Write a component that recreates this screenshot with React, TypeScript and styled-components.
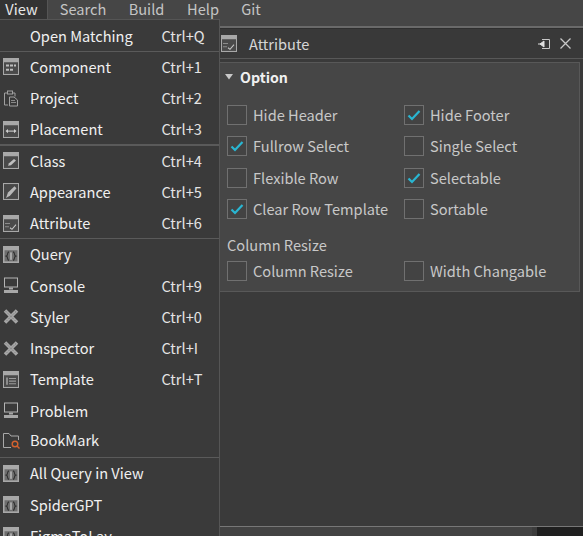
import React from "react";
import styled, { createGlobalStyle } from "styled-components";

const Global = createGlobalStyle`
  html, body { margin: 0; padding: 0; background: #3a3a3a; overflow: hidden; }
  body { font-family: "Noto Sans CJK KR", "Noto Sans CJK SC", sans-serif; font-size: 14.6px; line-height: 20px; color: #e8e8e8; }
  #root { width: 583px; height: 536px; overflow: hidden; position: relative; }
`;

const Page = styled.div`
  width: 583px;
  height: 536px;
  display: flex;
  flex-direction: column;
  background: #3a3a3a;
  position: relative;
  overflow: hidden;
`;

const MenuBar = styled.div`
  height: 19px;
  display: flex;
  align-items: center;
  background: #464646;
  flex: none;
`;

const BarItem = styled.div<{ $active?: boolean; $w: number }>`
  width: ${(p) => p.$w}px;
  height: 19px;
  line-height: 17px;
  text-align: center;
  padding-right: ${(p) => (p.$active ? 4 : 0)}px;
  color: ${(p) => (p.$active ? "#e6e6e6" : "#c4c4c4")};
  background: ${(p) => (p.$active ? "#333333" : "transparent")};
  border-right: ${(p) => (p.$active ? "1px solid #555" : "none")};
  box-sizing: border-box;
`;

const TopGap = styled.div`
  height: 7px;
  background: #464646;
  flex: none;
`;

const Rule = styled.div`
  height: 2px;
  background: #6a6a6a;
  border-bottom: 1px solid #2f2f2f;
  flex: none;
`;

const Work = styled.div`
  flex: 1;
  display: flex;
  flex-direction: column;
  padding-left: 220px;
  min-height: 0;
`;

const PanelHead = styled.div`
  height: 29px;
  display: flex;
  align-items: center;
  gap: 12px;
  background: #393939;
  border-bottom: 1px solid #585858;
  flex: none;
  padding: 0 12px 0 1px;
  color: #d6d6d6;
`;

const HeadTitle = styled.span`
  flex: 1;
`;

const HeadIcons = styled.div`
  display: flex;
  align-items: center;
  gap: 9px;
`;

const Card = styled.div`
  margin: 3px 3px 0 0;
  height: 230px;
  box-sizing: border-box;
  background: #464646;
  border: 1px solid #585858;
  border-left: none;
  padding: 3px 0 0 7px;
  flex: none;
`;

const CardTitle = styled.div`
  display: flex;
  align-items: center;
  gap: 7px;
  margin-left: -2px;
  font-weight: 700;
  font-size: 14.2px;
  color: #f0f0f0;
  height: 22px;
  margin-bottom: 11px;
`;

const Grid = styled.div`
  display: grid;
  grid-template-columns: 177px 1fr;
  grid-auto-rows: 31.5px;
`;

const Check = styled.label`
  display: flex;
  align-items: center;
  gap: 6px;
  color: #c8c8c8;
  white-space: nowrap;
`;

const Box = styled.span`
  width: 20px;
  height: 20px;
  box-sizing: border-box;
  border: 1px solid #707070;
  background: #434343;
  display: flex;
  align-items: center;
  justify-content: center;
  flex: none;
`;

const SubLabel = styled.div`
  height: 22px;
  line-height: 22px;
  margin-top: 9px;
  margin-bottom: -1px;
  color: #c8c8c8;
`;

const Footer = styled.div`
  margin-top: auto;
  height: 9px;
  display: flex;
  border-top: 1px solid #777;
  flex: none;
`;

const FooterLeft = styled.div`
  flex: 1;
  background: #434343;
`;

const FooterGap = styled.div`
  width: 5px;
  background: #3c3c3c;
`;

const FooterRight = styled.div`
  width: 46px;
  background: #1f1f1f;
`;

const Menu = styled.div`
  position: absolute;
  left: 0;
  top: 19px;
  width: 219px;
  height: 530px;
  padding-top: 1px;
  background: #3a3a3a;
  border-right: 1px solid #555;
  border-top: 1px solid #555;
`;

const sepShadow: Record<number, string> = {
  0: "none",
  1: "0 -1px 0 #5a5a5a",
  2: "0 -1px 0 #5a5a5a, inset 0 1px 0 #5a5a5a",
  3: "inset 0 1px 0 #5a5a5a",
};

const Row = styled.div<{ $h: number; $sep: number; $gap: number }>`
  height: ${(p) => p.$h}px;
  margin-top: ${(p) => p.$gap}px;
  display: flex;
  align-items: center;
  color: #f0f0f0;
  box-shadow: ${(p) => sepShadow[p.$sep]};
`;

const IconCell = styled.span`
  width: 30px;
  padding-left: 3px;
  box-sizing: border-box;
  display: flex;
  align-items: center;
  flex: none;
`;

const Label = styled.span`
  width: 131.500px;
  flex: none;
`;

const Shortcut = styled.span`
  color: #e4e4e4;
`;

const IconSvg = styled.svg`
  width: 16px;
  height: 17px;
  flex: none;
`;

const Window = ({ children }: { children?: React.ReactNode }) => (
  <IconSvg viewBox="0 0 16 16" preserveAspectRatio="none">
    <rect x="0" y="0" width="16" height="16" fill="#a8a8a8" />
    <rect x="1" y="4" width="14" height="11" fill="#4a4a4a" />
    {children}
  </IconSvg>
);

type IconName = "component" | "project" | "placement" | "class" | "appearance" | "attribute" | "query" | "console" | "tools" | "template" | "bookmark";

const Icon = ({ name }: { name: IconName }) => {
  switch (name) {
    case "component":
      return (
        <Window>
          <path d="M3 6h3v2H3zM7 6h3v2H7zM11 6h2v2h-2zM3 10h3v2H3zM7 10h3v2H7z" fill="#bdbdbd" />
        </Window>
      );
    case "project":
      return (
        <IconSvg viewBox="0 0 16 16" fill="none" stroke="#a0a0a0">
          <path d="M4.500 2.500H1.500V14.500H5M9.500 2.500H12V6" />
          <rect x="4.500" y="0.500" width="5" height="3" />
          <path d="M6.500 6.500H11L14.500 9.500V15.500H6.500Z" />
          <path d="M8 12h5M8 10h4" stroke="#888" />
        </IconSvg>
      );
    case "placement":
      return (
        <Window>
          <path d="M4 9.500h8" stroke="#d0d0d0" fill="none" />
          <path d="M2.500 9.500L5 7.500v4zM13.500 9.500L11 7.500v4z" fill="#d0d0d0" />
        </Window>
      );
    case "class":
      return (
        <Window>
          <path d="M5 13l1-2.500 5-4 2 1.500-5 4.500z" fill="#c0c0c0" />
        </Window>
      );
    case "appearance":
      return (
        <IconSvg viewBox="0 0 16 16" preserveAspectRatio="none">
          <rect width="16" height="16" fill="#a8a8a8" />
          <rect x="1" y="1" width="14" height="14" fill="#484848" />
          <path d="M3 14l2-5 6.500-6 2 2-6.500 7z" fill="#b8b8b8" />
        </IconSvg>
      );
    case "attribute":
      return (
        <Window>
          <path d="M2 8h5M2 11h4" stroke="#8c8c8c" />
          <path d="M7 12l2 1.500L13 9" stroke="#c8c8c8" fill="none" />
        </Window>
      );
    case "query":
      return (
        <IconSvg viewBox="0 0 16 16" preserveAspectRatio="none">
          <rect width="16" height="16" fill="#a8a8a8" />
          <rect x="1.500" y="4" width="13" height="10.500" fill="#6e6e6e" />
          <rect x="7" y="6" width="2" height="7" fill="#a8a8a8" />
          <path d="M6 5.500C3.800 5.500 5.200 9 3.500 9.500 5.200 10 3.800 13.500 6 13.500M10 5.500c2.200 0 .8 3.500 2.500 4-1.700.5-.3 4-2.500 4" stroke="#2e2e2e" strokeWidth="1.100" fill="none" />
        </IconSvg>
      );
    case "console":
      return (
        <IconSvg viewBox="0 0 16 16">
          <rect x="1.500" y="0.500" width="13" height="9" fill="#3a3a3a" stroke="#b4b4b4" />
          <rect x="6" y="10" width="4" height="2" fill="#a8a8a8" />
          <rect x="1" y="12.500" width="14" height="3" fill="#a8a8a8" />
        </IconSvg>
      );
    case "tools":
      return (
        <IconSvg viewBox="0 0 16 16" fill="none">
          <path d="M2 2l12 12" stroke="#a6a6a6" strokeWidth="3.600" />
          <path d="M14 2L2 14" stroke="#a6a6a6" strokeWidth="3.600" />
          <path d="M3 3l9 9" stroke="#666" strokeWidth="1" strokeDasharray="1 2" />
          <path d="M13 3L4 12" stroke="#666" strokeWidth="1" strokeDasharray="1 2" />
        </IconSvg>
      );
    case "template":
      return (
        <Window>
          <path d="M3 6h2v7H3z" fill="#8c8c8c" />
          <path d="M6 7h7M6 9.500h7M6 12h7" stroke="#9a9a9a" />
        </Window>
      );
    case "bookmark":
      return (
        <svg width="17" height="17" viewBox="0 0 17 17" fill="none">
          <path d="M0.500 15.500V1.500H6L8 4H15.500V8M0.500 15.500H8" stroke="#a8a8a8" />
          <circle cx="12" cy="12" r="2.800" stroke="#d4622f" strokeWidth="1.400" />
          <path d="M14 14l2.500 2.500" stroke="#d4622f" strokeWidth="1.400" />
        </svg>
      );
  }
};

const Tick = () => (
  <svg width="14" height="12" viewBox="0 0 14 12" fill="none">
    <path d="M1.500 6.500L5 10L12.500 2" stroke="#29b6d2" strokeWidth="2.200" />
  </svg>
);

const Option = ({ label, on }: { label: string; on?: boolean }) => (
  <Check>
    <Box>{on && <Tick />}</Box>
    {label}
  </Check>
);

const Item = ({ icon, label, keys, h = 31.25, sep = 0, gap = 0 }: { icon?: IconName; label: string; keys?: string; h?: number; sep?: number; gap?: number }) => (
  <Row $h={h} $sep={sep} $gap={gap}>
    <IconCell>{icon && <Icon name={icon} />}</IconCell>
    <Label>{label}</Label>
    {keys && <Shortcut>{keys}</Shortcut>}
  </Row>
);

export default function App() {
  return (
    <Page>
      <Global />
      <MenuBar>
        <BarItem $active $w={48}>View</BarItem>
        <BarItem $w={70}>Search</BarItem>
        <BarItem $w={57}>Build</BarItem>
        <BarItem $w={56}>Help</BarItem>
        <BarItem $w={40}>Git</BarItem>
      </MenuBar>
      <TopGap />
      <Rule />
      <Work>
        <PanelHead>
          <Icon name="attribute" />
          <HeadTitle>Attribute</HeadTitle>
          <HeadIcons>
            <svg width="14" height="12" viewBox="0 0 14 12" fill="none">
              <path d="M5 1.500H12.500V10.500H5" stroke="#c8c8c8" />
              <path d="M1 6h6M7 3v6L3 6z" fill="#e0e0e0" stroke="#e0e0e0" />
            </svg>
            <svg width="11" height="11" viewBox="0 0 11 11" fill="none">
              <path d="M0.500 0.500l10 10M10.500 0.500l-10 10" stroke="#c8c8c8" strokeWidth="1.300" />
            </svg>
          </HeadIcons>
        </PanelHead>
        <Card>
          <CardTitle>
            <svg width="8" height="6" viewBox="0 0 8 6">
              <path d="M0 0h8L4 5.500z" fill="#c8c8c8" />
            </svg>
            Option
          </CardTitle>
          <Grid>
            <Option label="Hide Header" />
            <Option label="Hide Footer" on />
            <Option label="Fullrow Select" on />
            <Option label="Single Select" />
            <Option label="Flexible Row" />
            <Option label="Selectable" on />
            <Option label="Clear Row Template" on />
            <Option label="Sortable" />
          </Grid>
          <SubLabel>Column Resize</SubLabel>
          <Grid>
            <Option label="Column Resize" />
            <Option label="Width Changable" />
          </Grid>
        </Card>
        <Footer>
          <FooterLeft />
          <FooterGap />
          <FooterRight />
        </Footer>
      </Work>
      <Menu>
        <Item label="Open Matching" keys="Ctrl+Q" h={30.2} />
        <Item icon="component" label="Component" keys="Ctrl+1" sep={3} />
        <Item icon="project" label="Project" keys="Ctrl+2" />
        <Item icon="placement" label="Placement" keys="Ctrl+3" />
        <Item icon="class" label="Class" keys="Ctrl+4" sep={2} />
        <Item icon="appearance" label="Appearance" keys="Ctrl+5" />
        <Item icon="attribute" label="Attribute" keys="Ctrl+6" />
        <Item icon="query" label="Query" sep={1} />
        <Item icon="console" label="Console" keys="Ctrl+9" />
        <Item icon="tools" label="Styler" keys="Ctrl+0" />
        <Item icon="tools" label="Inspector" keys="Ctrl+I" />
        <Item icon="template" label="Template" keys="Ctrl+T" />
        <Item icon="console" label="Problem" />
        <Item icon="bookmark" label="BookMark" h={28.5} />
        <Item icon="query" label="All Query in View" h={31} sep={1} gap={3.3} />
        <Item icon="query" label="SpiderGPT" />
        <Item icon="query" label="FigmaToLay" />
      </Menu>
    </Page>
  );
}
